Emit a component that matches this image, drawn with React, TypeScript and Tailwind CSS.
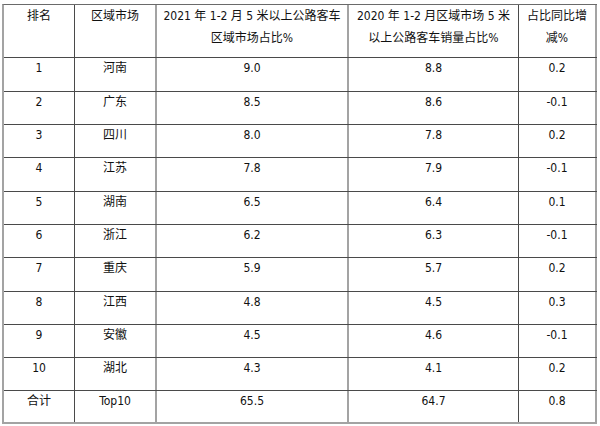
import React from 'react';

interface Row {
  rank: string;
  region: string;
  share2021: string;
  share2020: string;
  change: string;
  h: string;
}

const rows: Row[] = [
  { rank: '1', region: '河南', share2021: '9.0', share2020: '8.8', change: '0.2', h: 'h-[34px]' },
  { rank: '2', region: '广东', share2021: '8.5', share2020: '8.6', change: '-0.1', h: 'h-[33px]' },
  { rank: '3', region: '四川', share2021: '8.0', share2020: '7.8', change: '0.2', h: 'h-[33px]' },
  { rank: '4', region: '江苏', share2021: '7.8', share2020: '7.9', change: '-0.1', h: 'h-[34px]' },
  { rank: '5', region: '湖南', share2021: '6.5', share2020: '6.4', change: '0.1', h: 'h-[33px]' },
  { rank: '6', region: '浙江', share2021: '6.2', share2020: '6.3', change: '-0.1', h: 'h-[33px]' },
  { rank: '7', region: '重庆', share2021: '5.9', share2020: '5.7', change: '0.2', h: 'h-[34px]' },
  { rank: '8', region: '江西', share2021: '4.8', share2020: '4.5', change: '0.3', h: 'h-[33px]' },
  { rank: '9', region: '安徽', share2021: '4.5', share2020: '4.6', change: '-0.1', h: 'h-[33px]' },
  { rank: '10', region: '湖北', share2021: '4.3', share2020: '4.1', change: '0.2', h: 'h-[33px]' },
];

// column borders: thin dark vs. thicker grey, as in the source document
const c1 = 'border-r border-[#4a4a4a]';
const c2 = 'border-r-2 border-[#a3a3a3]';
const c3 = 'border-r-2 border-[#a3a3a3]';
const c4 = 'border-r border-[#4a4a4a]';
const c5 = 'border-r-2 border-[#a3a3a3]';

export default function App() {
  return (
    <div
      className="w-[600px] h-[426px] bg-white pt-[4px] pl-[2px] text-[12px] text-[#111]"
      style={{ fontFamily: '"DejaVu Sans Condensed", "Noto Sans CJK SC", sans-serif' }}
    >
      <div className="w-[595px] border-l-2 border-t border-l-[#a3a3a3] border-t-[#6a6a6a]">
        {/* header */}
        <div className="grid grid-cols-[71px_82px_192px_170px_78px] h-[53px] border-b border-[#4a4a4a] leading-[22px] text-center whitespace-nowrap">
          <div className={c1}>排名</div>
          <div className={c2}>区域市场</div>
          <div className={c3}>
            2021 年 1-2 月 5 米以上公路客车
            <br />
            区域市场占比%
          </div>
          <div className={c4}>
            2020 年 1-2 月区域市场 5 米
            <br />
            以上公路客车销量占比%
          </div>
          <div className={c5}>
            占比同比增
            <br />
            减%
          </div>
        </div>

        {rows.map((r) => (
          <div
            key={r.rank}
            className={`grid grid-cols-[71px_82px_192px_170px_78px] ${r.h} border-b border-[#4a4a4a] leading-[20px] text-center`}
          >
            <div className={c1}>{r.rank}</div>
            <div className={c2}>{r.region}</div>
            <div className={c3}>{r.share2021}</div>
            <div className={c4}>{r.share2020}</div>
            <div className={c5}>{r.change}</div>
          </div>
        ))}

        {/* total */}
        <div className="grid grid-cols-[71px_82px_192px_170px_78px] h-[33px] border-b-2 border-[#a3a3a3] leading-[20px] text-center">
          <div className={c1}>合计</div>
          <div className={c2}>Top10</div>
          <div className={c3}>65.5</div>
          <div className={c4}>64.7</div>
          <div className={c5}>0.8</div>
        </div>
      </div>
    </div>
  );
}
